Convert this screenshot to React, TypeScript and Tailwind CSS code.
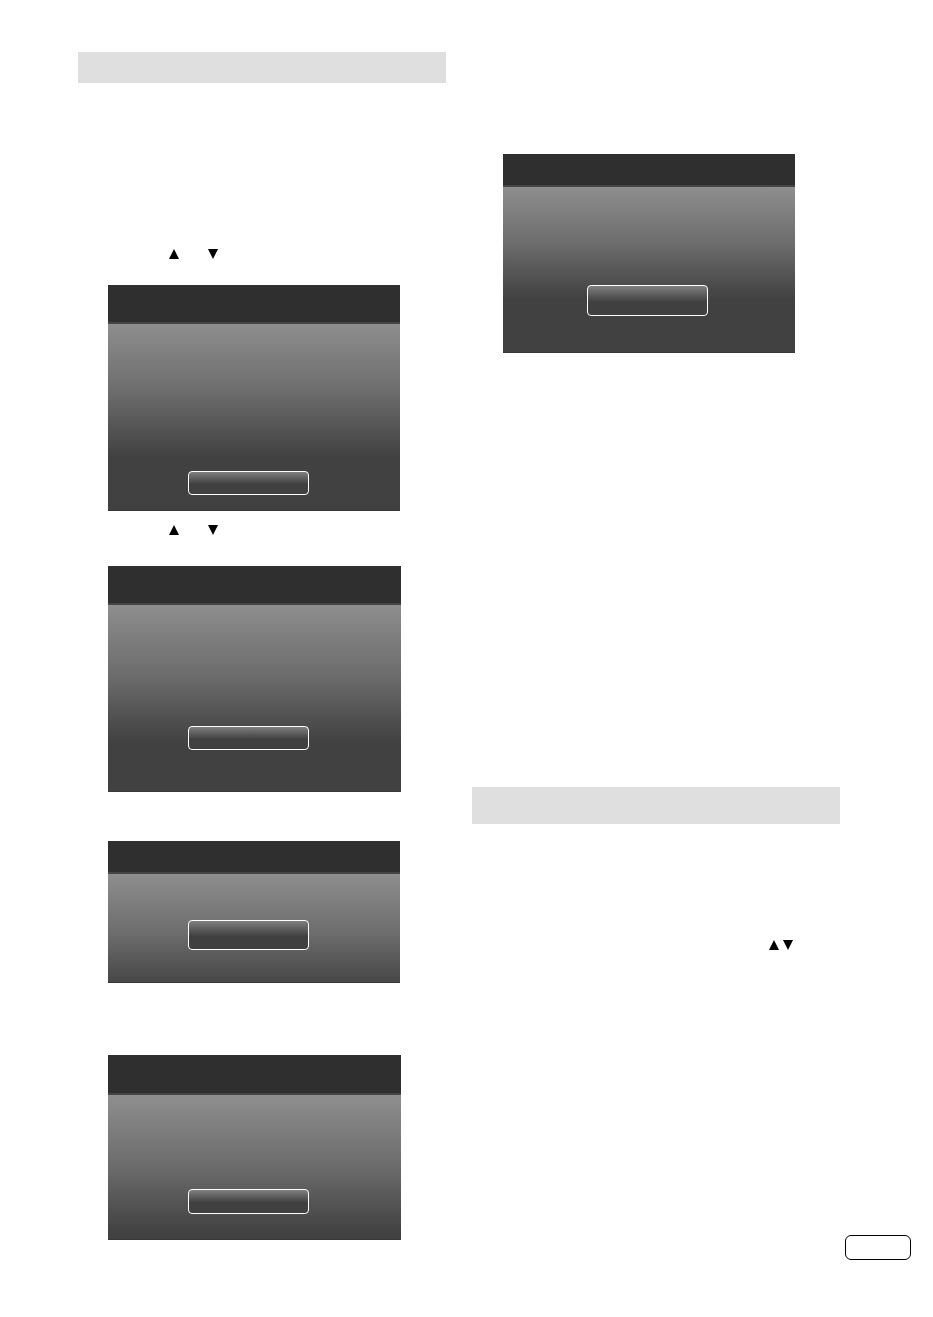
import React from 'react';

interface DialogProps {
  className: string;
  headerClass: string;
  bodyClass: string;
  buttonClass: string;
}

const Dialog: React.FC<DialogProps> = ({ className, headerClass, bodyClass, buttonClass }) => (
  <section className={`flex flex-col border-b border-[#393939] ${className}`}>
    <header className={`border-b-2 border-[#464646] bg-[#2f2f2f] ${headerClass}`} />
    <div className={`flex grow flex-col items-start bg-linear-to-b from-[#8e8e8e] via-[#6d6d6d] ${bodyClass}`}>
      <button
        type="button"
        className={`w-[121px] rounded border border-white bg-linear-to-b from-[#808080] to-[#404040] to-55% ${buttonClass}`}
      />
    </div>
  </section>
);

const UpArrow = () => (
  <svg className="h-[10px] w-[10px]" viewBox="0 0 10 10" aria-hidden="true">
    <path d="M5 0L10 10H0Z" />
  </svg>
);

const DownArrow = () => (
  <svg className="h-[10px] w-[10px]" viewBox="0 0 10 10" aria-hidden="true">
    <path d="M0 0H10L5 10Z" />
  </svg>
);

const App: React.FC = () => {
  return (
    <main className="flex bg-white pt-[52px] pb-[57px] pl-[78px] pr-[22px]">
      {/* Left column */}
      <div className="min-w-0 flex-1 pb-5">
        <div className="h-[31px] bg-[#dfdfdf]" />

        <div className="mt-[166px] flex gap-[29px] pl-[91px]">
          <UpArrow />
          <DownArrow />
        </div>
        <Dialog
          className="mt-[26px] ml-[30px] mr-[46px] h-[226px]"
          headerClass="h-[39px]"
          bodyClass="via-36% to-[#414141] to-72% pl-20"
          buttonClass="mt-[147px] h-6"
        />

        <div className="mt-[14px] flex gap-[29px] pl-[91px]">
          <UpArrow />
          <DownArrow />
        </div>
        <Dialog
          className="mt-[31px] ml-[30px] mr-[45px] h-[226px]"
          headerClass="h-[39px]"
          bodyClass="via-37% to-[#414141] to-74% pl-20"
          buttonClass="mt-[121px] h-6"
        />

        <Dialog
          className="mt-[49px] ml-[30px] mr-[46px] h-[142px]"
          headerClass="h-[33px]"
          bodyClass="via-54% to-[#484848] pl-20"
          buttonClass="mt-[46px] h-[30px]"
        />

        <Dialog
          className="mt-[72px] ml-[30px] mr-[45px] h-[185px]"
          headerClass="h-[40px]"
          bodyClass="via-48% to-[#414141] to-97% pl-20"
          buttonClass="mt-[94px] h-[25px]"
        />
      </div>

      {/* Right column */}
      <div className="ml-[26px] min-w-0 flex-1">
        <Dialog
          className="mt-[102px] ml-[31px] mr-[45px] h-[199px]"
          headerClass="h-[33px]"
          bodyClass="via-34% to-[#414141] to-68% pl-[84px]"
          buttonClass="mt-[98px] h-[31px]"
        />

        <div className="mt-[434px] h-[37px] bg-[#dfdfdf]" />

        <div className="mt-[116px] flex justify-end gap-1 pr-[47px]">
          <UpArrow />
          <DownArrow />
        </div>
      </div>

      {/* Page number box */}
      <footer className="ml-[5px] h-[25px] w-[66px] shrink-0 self-end rounded-md border border-black" />
    </main>
  );
};

export default App;
